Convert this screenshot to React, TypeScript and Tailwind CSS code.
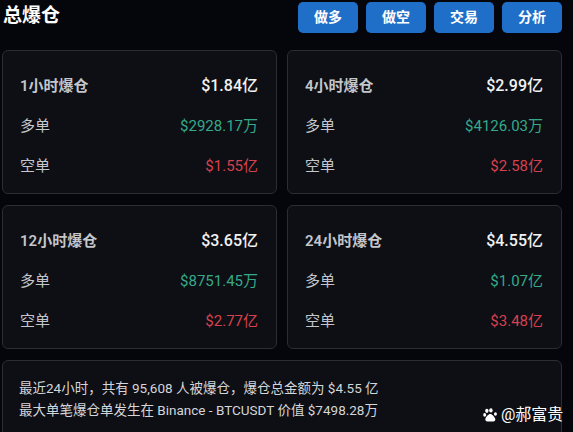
import React from 'react';

const font = { fontFamily: 'Roboto, "Noto Sans CJK SC", sans-serif' };

const buttons = ['做多', '做空', '交易', '分析'];

const cards = [
  { label: '1小时爆仓', total: '$1.84亿', long: '$2928.17万', short: '$1.55亿' },
  { label: '4小时爆仓', total: '$2.99亿', long: '$4126.03万', short: '$2.58亿' },
  { label: '12小时爆仓', total: '$3.65亿', long: '$8751.45万', short: '$2.77亿' },
  { label: '24小时爆仓', total: '$4.55亿', long: '$1.07亿', short: '$3.48亿' },
];

const PawIcon = () => (
  <svg width="15" height="14" viewBox="0 0 14 13" fill="#fff">
    <ellipse cx="3.6" cy="2.6" rx="1.6" ry="2" />
    <ellipse cx="7.4" cy="2.2" rx="1.6" ry="2" />
    <ellipse cx="1.6" cy="6.4" rx="1.4" ry="1.7" />
    <ellipse cx="11.6" cy="5.6" rx="1.4" ry="1.7" />
    <path d="M6.8 5.6c-1.7 0-3.8 2.6-4.5 4.2-.6 1.5.4 2.8 1.9 2.8h5.3c1.6 0 2.5-1.4 1.8-2.8-.8-1.6-2.8-4.2-4.5-4.2z" />
  </svg>
);

const StatCard = ({ label, total, long, short }: typeof cards[number]) => (
  <div className="h-[144px] rounded-md border border-[#2a2d33] bg-[#0d0f14] pl-[17px] pr-[18px] pt-[25px] flex flex-col gap-[20px]">
    <div className="flex items-center justify-between h-[20px]">
      <span className="text-[15px] font-semibold text-[#c4c6cb]">{label}</span>
      <span className="text-[16px] font-medium text-[#f2f2f2]">{total}</span>
    </div>
    <div className="flex items-center justify-between h-[20px]">
      <span className="text-[15px] text-[#c4c6cb]">多单</span>
      <span className="text-[15px] text-[#35a98a]">{long}</span>
    </div>
    <div className="flex items-center justify-between h-[20px]">
      <span className="text-[15px] text-[#c4c6cb]">空单</span>
      <span className="text-[15px] text-[#d7414f]">{short}</span>
    </div>
  </div>
);

export default function App() {
  return (
    <div className="w-[573px] h-[432px] overflow-hidden bg-[#05060b] pl-[2px] pr-[11px] relative" style={font}>
      <div className="flex items-start justify-between h-[50px]">
        <h1 className="pl-[1px] pt-[3px] text-[19px] font-bold text-white leading-[26px]">总爆仓</h1>
        <div className="flex gap-2 pt-[2px]">
          {buttons.map(b => (
            <button key={b} className="w-[60px] h-[31px] rounded-[5px] bg-[#1f6fc9] text-white text-[14px] font-bold">
              {b}
            </button>
          ))}
        </div>
      </div>

      <div className="grid grid-cols-2 gap-x-[10px] gap-y-[11px]">
        {cards.map(c => <StatCard key={c.label} {...c} />)}
      </div>

      <div className="mt-[11px] h-[90px] rounded-md border border-[#2a2d33] bg-[#0d0f14] px-[16px] pt-[16px] text-[13.5px] leading-[22px] text-[#d4d6da]">
        <p>最近24小时，共有 95,608 人被爆仓，爆仓总金额为 $4.55 亿</p>
        <p>最大单笔爆仓单发生在 Binance - BTCUSDT 价值 $7498.28万</p>
      </div>

      <div className="absolute left-[483px] top-[403px] flex items-center gap-[3px] text-white text-[16px]">
        <PawIcon />
        <span>@郝富贵</span>
      </div>
    </div>
  );
}
